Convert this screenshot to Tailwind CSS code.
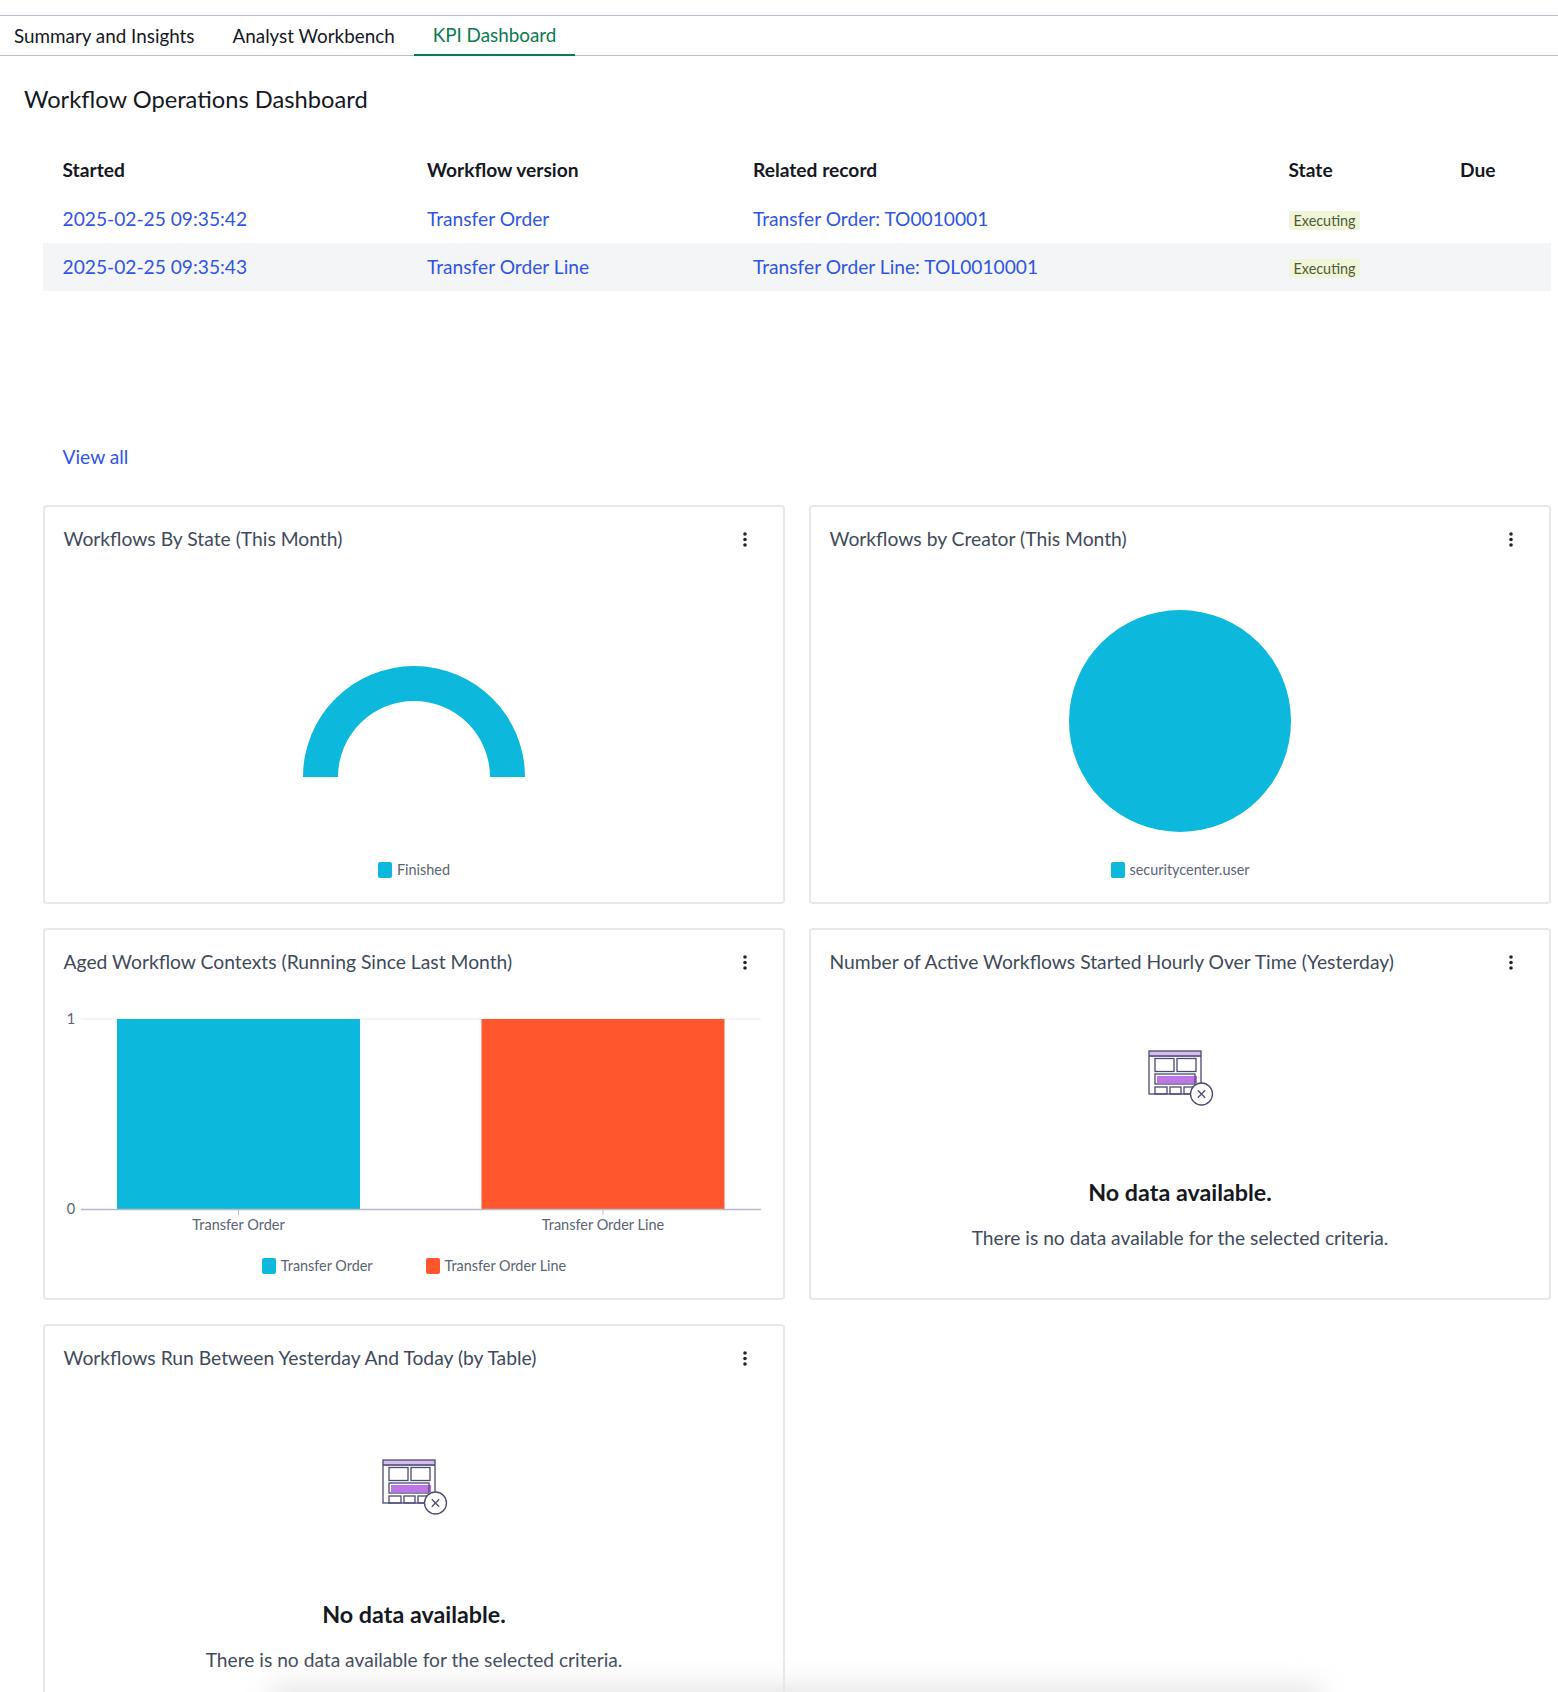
<!DOCTYPE html>
<html lang="en">
<head>
  <meta charset="UTF-8" />
  <title>Workflow Operations Dashboard</title>
  <script src="https://cdn.jsdelivr.net/npm/@tailwindcss/browser@4"></script>
</head>
<body class="relative w-[1558px] h-[1692px] overflow-hidden bg-white font-['Lato',sans-serif] text-[#16191f]">
  <!-- Tabs -->
  <nav class="mt-[15px] h-[41px] flex border-y border-[#b9bdc9] text-[18.85px]">
    <a class="h-[40px] pl-[14px] pr-[19px] flex items-center">Summary and Insights</a>
    <a class="h-[40px] px-[19px] flex items-center">Analyst Workbench</a>
    <a class="h-[40px] px-[19px] flex items-center text-[#0b7a50] border-b-2 border-[#0b7a50]">KPI Dashboard</a>
  </nav>

  <h1 class="ml-[24px] mt-[26px] h-[34px] leading-[34px] text-[23.7px]">Workflow Operations Dashboard</h1>

  <!-- Contexts table -->
  <table class="ml-[43px] mt-[30px] w-[1508px] table-fixed text-[19.2px]">
    <colgroup>
      <col class="w-[365px]" /><col class="w-[326px]" /><col class="w-[535px]" /><col class="w-[172px]" /><col class="w-[110px]" />
    </colgroup>
    <thead>
      <tr class="h-[49px] font-bold text-left">
        <th class="pl-[19.5px]">Started</th>
        <th class="pl-[19px]">Workflow version</th>
        <th class="pl-[19px]">Related record</th>
        <th class="pl-[19.5px]">State</th>
        <th class="pl-[19px]">Due</th>
      </tr>
    </thead>
    <tbody class="text-[#2f55e4]">
      <tr class="h-[48px]">
        <td class="pl-[19.5px]">2025-02-25 09:35:42</td>
        <td class="pl-[19px]">Transfer Order</td>
        <td class="pl-[19px]">Transfer Order: TO0010001</td>
        <td class="pl-[20px]"><span class="inline-block px-[4.5px] h-[19px] leading-[19px] rounded-[2px] bg-[#f0f5d8] text-[#4f5b3a] text-[14.4px]">Executing</span></td>
        <td></td>
      </tr>
      <tr class="h-[48px] bg-[#f4f5f7]">
        <td class="pl-[19.5px]">2025-02-25 09:35:43</td>
        <td class="pl-[19px]">Transfer Order Line</td>
        <td class="pl-[19px]">Transfer Order Line: TOL0010001</td>
        <td class="pl-[20px]"><span class="inline-block px-[4.5px] h-[19px] leading-[19px] rounded-[2px] bg-[#f0f5d8] text-[#4f5b3a] text-[14.4px]">Executing</span></td>
        <td></td>
      </tr>
    </tbody>
  </table>

  <a class="block ml-[62.5px] mt-[152px] h-[28px] leading-[28px] text-[19.2px] text-[#2f55e4]">View all</a>

  <!-- Widgets -->
  <section class="ml-[43px] mt-[34px] w-[1508px] grid grid-cols-[742px_742px] gap-x-[24px] gap-y-[24px]">
    <div class="h-[399px] box-border border-2 border-[#e7e8eb] rounded-[4px] flex flex-col">
      <div class="h-[66px] pl-[18.500px] pr-[36px] pb-[1px] flex items-center justify-between text-[19.3px] text-[#414a5a]">
        <span>Workflows By State (This Month)</span>
        <svg width="4" height="15" viewBox="0 0 4 15" class="text-[#22252b]"><circle cx="2" cy="2" r="1.800" fill="currentColor"/><circle cx="2" cy="7.500" r="1.800" fill="currentColor"/><circle cx="2" cy="13" r="1.800" fill="currentColor"/></svg>
      </div>
      <svg class="block" width="738" height="280" viewBox="0 0 738 280">
        <path d="M258 204 A111 111 0 0 1 480 204 L445 204 A76 76 0 0 0 293 204 Z" fill="#0cb9dc"/>
      </svg>
      <div class="h-[34px] flex items-center justify-center gap-[5px] text-[14.4px] text-[#5b6472]">
        <i class="w-[14px] h-[16px] rounded-[2px] bg-[#0cb9dc]"></i><span>Finished</span>
      </div>
    </div>

    <div class="h-[399px] box-border border-2 border-[#e7e8eb] rounded-[4px] flex flex-col">
      <div class="h-[66px] pl-[18.500px] pr-[36px] pb-[1px] flex items-center justify-between text-[19.3px] text-[#414a5a]">
        <span>Workflows by Creator (This Month)</span>
        <svg width="4" height="15" viewBox="0 0 4 15" class="text-[#22252b]"><circle cx="2" cy="2" r="1.800" fill="currentColor"/><circle cx="2" cy="7.500" r="1.800" fill="currentColor"/><circle cx="2" cy="13" r="1.800" fill="currentColor"/></svg>
      </div>
      <svg class="block" width="738" height="280" viewBox="0 0 738 280">
        <circle cx="369" cy="148" r="111" fill="#0cb9dc"/>
      </svg>
      <div class="h-[34px] flex items-center justify-center gap-[5px] text-[14.4px] text-[#5b6472]">
        <i class="w-[14px] h-[16px] rounded-[2px] bg-[#0cb9dc]"></i><span>securitycenter.user</span>
      </div>
    </div>

    <div class="h-[372px] box-border border-2 border-[#e7e8eb] rounded-[4px] flex flex-col">
      <div class="h-[66px] pl-[18.500px] pr-[36px] pb-[2px] flex items-center justify-between text-[19.3px] text-[#414a5a]">
        <span>Aged Workflow Contexts (Running Since Last Month)</span>
        <svg width="4" height="15" viewBox="0 0 4 15" class="text-[#22252b]"><circle cx="2" cy="2" r="1.800" fill="currentColor"/><circle cx="2" cy="7.500" r="1.800" fill="currentColor"/><circle cx="2" cy="13" r="1.800" fill="currentColor"/></svg>
      </div>
      <svg class="block" width="738" height="253" viewBox="0 0 738 253" font-size="14.500" fill="#5b6472">
        <line x1="36" y1="23" x2="716" y2="23" stroke="#eff0f2" stroke-width="1.500"/>
        <rect x="72" y="23" width="243" height="190" fill="#0cb9dc"/>
        <rect x="436.500" y="23" width="243" height="190" fill="#ff562e"/>
        <line x1="36" y1="213.500" x2="716" y2="213.500" stroke="#b6bac6" stroke-width="1.500"/>
        <line x1="193.500" y1="214" x2="193.500" y2="219" stroke="#b6bac6"/>
        <line x1="558" y1="214" x2="558" y2="219" stroke="#b6bac6"/>
        <text x="26" y="28" text-anchor="middle">1</text>
        <text x="26" y="218" text-anchor="middle">0</text>
        <text x="193.500" y="234" text-anchor="middle">Transfer Order</text>
        <text x="558" y="234" text-anchor="middle">Transfer Order Line</text>
      </svg>
      <div class="h-[34px] flex items-center justify-center gap-[5px] text-[14.4px] text-[#5b6472]">
        <i class="w-[14px] h-[16px] rounded-[2px] bg-[#0cb9dc]"></i><span class="mr-[48px]">Transfer Order</span>
        <i class="w-[14px] h-[16px] rounded-[2px] bg-[#ff562e]"></i><span>Transfer Order Line</span>
      </div>
    </div>

    <div class="h-[372px] box-border border-2 border-[#e7e8eb] rounded-[4px] flex flex-col">
      <div class="h-[66px] pl-[18.500px] pr-[36px] pb-[2px] flex items-center justify-between text-[19.3px] text-[#414a5a]">
        <span>Number of Active Workflows Started Hourly Over Time (Yesterday)</span>
        <svg width="4" height="15" viewBox="0 0 4 15" class="text-[#22252b]"><circle cx="2" cy="2" r="1.800" fill="currentColor"/><circle cx="2" cy="7.500" r="1.800" fill="currentColor"/><circle cx="2" cy="13" r="1.800" fill="currentColor"/></svg>
      </div>
      <div class="flex flex-col items-center">
        <svg class="mt-[54px] ml-[1px]" width="66" height="56" viewBox="0 0 66 56" fill="none" stroke="#4c4a75" stroke-width="1.300">
          <rect x="1" y="1" width="52" height="6" fill="#d3bdea" stroke="none"/>
          <rect x="1" y="1" width="52" height="43"/>
          <line x1="1" y1="6" x2="53" y2="6"/>
          <rect x="7" y="8.500" width="19" height="13"/>
          <rect x="29" y="8.500" width="19" height="13"/>
          <rect x="9" y="26" width="40" height="7" fill="#bf74ea" stroke="none"/>
          <rect x="7" y="24" width="40" height="10"/>
          <rect x="7" y="37" width="12" height="7"/>
          <rect x="22" y="37" width="11" height="7"/>
          <rect x="36" y="37" width="12" height="7"/>
          <circle cx="53.500" cy="44" r="11" fill="#fff"/>
          <path d="M49.800 40.300 57.200 47.700 M57.200 40.300 49.800 47.700"/>
        </svg>
        <h3 class="mt-[70px] text-[23.3px] leading-[32px] font-bold text-[#16191f]">No data available.</h3>
        <p class="mt-[16px] text-[19.2px] leading-[28px] text-[#414a5a]">There is no data available for the selected criteria.</p>
      </div>
    </div>

    <div class="h-[398px] box-border border-2 border-[#e7e8eb] rounded-[4px] flex flex-col">
      <div class="h-[66px] pl-[18.500px] pr-[36px] pb-[2px] flex items-center justify-between text-[19.3px] text-[#414a5a]">
        <span>Workflows Run Between Yesterday And Today (by Table)</span>
        <svg width="4" height="15" viewBox="0 0 4 15" class="text-[#22252b]"><circle cx="2" cy="2" r="1.800" fill="currentColor"/><circle cx="2" cy="7.500" r="1.800" fill="currentColor"/><circle cx="2" cy="13" r="1.800" fill="currentColor"/></svg>
      </div>
      <div class="flex flex-col items-center">
        <svg class="mt-[67px] ml-[1px]" width="66" height="56" viewBox="0 0 66 56" fill="none" stroke="#4c4a75" stroke-width="1.300">
          <rect x="1" y="1" width="52" height="6" fill="#d3bdea" stroke="none"/>
          <rect x="1" y="1" width="52" height="43"/>
          <line x1="1" y1="6" x2="53" y2="6"/>
          <rect x="7" y="8.500" width="19" height="13"/>
          <rect x="29" y="8.500" width="19" height="13"/>
          <rect x="9" y="26" width="40" height="7" fill="#bf74ea" stroke="none"/>
          <rect x="7" y="24" width="40" height="10"/>
          <rect x="7" y="37" width="12" height="7"/>
          <rect x="22" y="37" width="11" height="7"/>
          <rect x="36" y="37" width="12" height="7"/>
          <circle cx="53.500" cy="44" r="11" fill="#fff"/>
          <path d="M49.800 40.300 57.200 47.700 M57.200 40.300 49.800 47.700"/>
        </svg>
        <h3 class="mt-[83px] text-[23.3px] leading-[32px] font-bold text-[#16191f]">No data available.</h3>
        <p class="mt-[16px] text-[19.2px] leading-[28px] text-[#414a5a]">There is no data available for the selected criteria.</p>
      </div>
    </div>
  </section>

  <!-- soft shadow at the bottom edge -->
  <div class="absolute left-[270px] bottom-[-24px] w-[1050px] h-[30px] bg-[#e4e4e4] blur-[14px]"></div>
</body>
</html>
